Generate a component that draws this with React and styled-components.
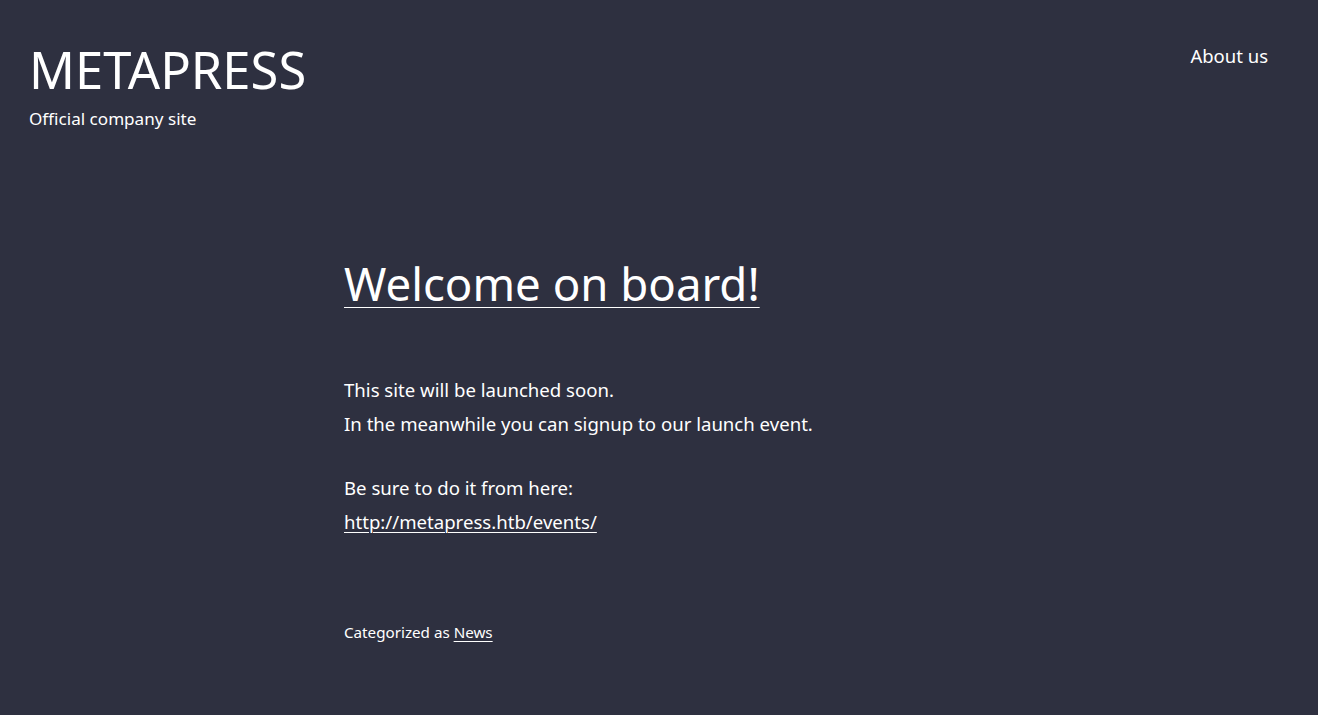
import styled, { createGlobalStyle } from "styled-components";

const GlobalStyle = createGlobalStyle`
  html, body {
    margin: 0;
    padding: 0;
    background: #2e3040;
  }
  body {
    font-family: "Noto Sans", "Open Sans", sans-serif;
    color: #ffffff;
  }
  * {
    box-sizing: border-box;
  }
`;

const Page = styled.div`
  min-height: 715px;
  background: #2e3040;
  display: flex;
  flex-direction: column;
`;

const Header = styled.header`
  display: flex;
  justify-content: space-between;
  align-items: flex-start;
  padding: 40px 50px 0 29px;
`;

const Brand = styled.div`
  display: flex;
  flex-direction: column;
`;

const SiteTitle = styled.h1`
  margin: 0;
  font-weight: 400;
  font-size: 50.7px;
  line-height: 60px;
`;

const Tagline = styled.p`
  margin: 8px 0 0 0;
  font-size: 17.1px;
  line-height: 22px;
`;

const Nav = styled.nav`
  padding-top: 2px;
`;

const NavLink = styled.a`
  color: #ffffff;
  text-decoration: none;
  font-size: 18.5px;
  line-height: 28px;
`;

const Main = styled.main`
  padding: 124px 0 0 344px;
  width: 1000px;
`;

const PostTitle = styled.h2`
  margin: 0;
  font-weight: 400;
  font-size: 45.6px;
  line-height: 58px;
`;

const TitleLink = styled.a`
  color: #ffffff;
  text-decoration: underline;
  text-decoration-thickness: 1px;
  text-underline-offset: 6px;
`;

const Body = styled.div`
  margin-top: 61px;
  font-size: 18.6px;
  line-height: 34px;
`;

const Para = styled.p`
  margin: 0 0 30px 0;
`;

const Link = styled.a`
  color: #ffffff;
  text-decoration: underline;
  text-decoration-thickness: 1px;
  text-underline-offset: 3px;
`;

const Meta = styled.div`
  margin-top: 83px;
  font-size: 15.2px;
  line-height: 20px;
`;

export default function App() {
  return (
    <>
      <GlobalStyle />
      <Page>
        <Header>
          <Brand>
            <SiteTitle>METAPRESS</SiteTitle>
            <Tagline>Official company site</Tagline>
          </Brand>
          <Nav>
            <NavLink href="#">About us</NavLink>
          </Nav>
        </Header>
        <Main>
          <PostTitle>
            <TitleLink href="#">Welcome on board!</TitleLink>
          </PostTitle>
          <Body>
            <Para>
              This site will be launched soon.
              <br />
              In the meanwhile you can signup to our launch event.
            </Para>
            <Para>
              Be sure to do it from here:
              <br />
              <Link href="#">http://metapress.htb/events/</Link>
            </Para>
          </Body>
          <Meta>
            Categorized as <Link href="#">News</Link>
          </Meta>
        </Main>
      </Page>
    </>
  );
}
